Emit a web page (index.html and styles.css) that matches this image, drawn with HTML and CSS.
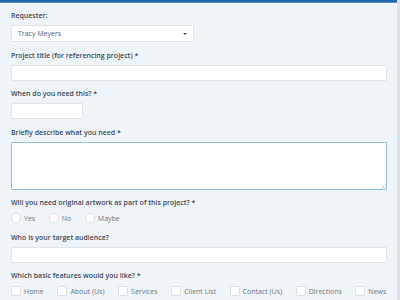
FILE: index.html
```html
<!DOCTYPE html>
<html lang="en">
<head>
  <meta charset="UTF-8" />
  <title>Project request</title>
  <link rel="stylesheet" href="styles.css">
</head>
<body>
  <div class="page">
    <div class="panel">
      <div class="topbar"></div>
      <form class="form">
        <div class="field">
          <label class="label">Requester:</label>
          <div class="select">
            <span>Tracy Meyers</span>
            <span class="caret"></span>
          </div>
        </div>

        <div class="field">
          <label class="label">Project title (for referencing project) *</label>
          <input class="input" type="text" />
        </div>

        <div class="field">
          <label class="label">When do you need this? *</label>
          <input class="input date" type="text" />
        </div>

        <div class="field">
          <label class="label">Briefly describe what you need *</label>
          <textarea class="input textarea"></textarea>
        </div>

        <div class="field">
          <label class="label">Will you need original artwork as part of this project? *</label>
          <div class="options">
            <label class="option"><input type="radio" name="art" class="radio" />Yes</label>
            <label class="option"><input type="radio" name="art" class="radio" />No</label>
            <label class="option"><input type="radio" name="art" class="radio" />Maybe</label>
          </div>
        </div>

        <div class="field">
          <label class="label">Who is your target audience?</label>
          <input class="input" type="text" />
        </div>

        <div class="field">
          <label class="label">Which basic features would you like? *</label>
          <div class="options">
            <label class="option"><input type="checkbox" class="check" />Home</label>
            <label class="option"><input type="checkbox" class="check" />About (Us)</label>
            <label class="option"><input type="checkbox" class="check" />Services</label>
            <label class="option"><input type="checkbox" class="check" />Client List</label>
            <label class="option"><input type="checkbox" class="check" />Contact (Us)</label>
            <label class="option"><input type="checkbox" class="check" />Directions</label>
            <label class="option"><input type="checkbox" class="check" />News</label>
          </div>
        </div>
      </form>
    </div>
    <div class="edge"></div>
  </div>
</body>
</html>
```

FILE: styles.css
```css
body {
  margin: 0;
  padding: 0;
  background: #eef3f8;
  font-family: 'Open Sans', 'Noto Sans', sans-serif;
  overflow: hidden;
}

.page {
  display: flex;
  height: 300px;
}

.panel {
  width: 397px;
  background: #eff4f8;
}

.edge {
  width: 3px;
  background: #dde2e8;
}

.topbar {
  height: 2px;
  background: #2568aa;
  border-bottom: 1px solid #4b8fcc;
}

.form {
  padding: 7px 10px 0 11px;
}

.field {
  margin-bottom: 7.5px;
}

.label {
  display: block;
  font-size: 7px;
  line-height: 12px;
  font-weight: 600;
  color: #3c4858;
  margin-bottom: 3px;
}

.input {
  display: block;
  box-sizing: border-box;
  width: 100%;
  height: 16px;
  margin: 0;
  padding: 0 6px;
  border: 1px solid #dfe4ea;
  border-radius: 1px;
  background: #fff;
  font-family: inherit;
  font-size: 7px;
  outline: none;
}

.select {
  box-sizing: border-box;
  width: 183px;
  height: 17px;
  padding: 0 6px;
  border: 1px solid #dfe4ea;
  border-radius: 1px;
  background: #fff;
  display: flex;
  align-items: center;
  justify-content: space-between;
  font-size: 7px;
  color: #566170;
}

.caret {
  width: 0;
  height: 0;
  border-left: 2px solid transparent;
  border-right: 2px solid transparent;
  border-top: 2.5px solid #444;
}

.date {
  width: 72px;
}

.textarea {
  height: 48px;
  resize: vertical;
  border-color: #8dbfe3;
}

.textarea::-webkit-resizer {
  background: linear-gradient(135deg, transparent 45%, #cdd4db 45%, #cdd4db 60%, transparent 60%, transparent 72%, #cdd4db 72%, #cdd4db 88%, transparent 88%) no-repeat right bottom / 5px 5px;
}

.options {
  display: flex;
  align-items: center;
  height: 12px;
}

.option {
  display: flex;
  align-items: center;
  white-space: nowrap;
  font-size: 7px;
  color: #6d7784;
  margin-right: 13.6px;
}

.radio,
.check {
  appearance: none;
  box-sizing: border-box;
  flex: none;
  width: 10px;
  height: 10px;
  margin: 0 3px 0 0;
  border: 1px solid #d8dee5;
  background: #fff;
}

.radio {
  border-radius: 50%;
}

.check {
  border-radius: 2px;
}
```
